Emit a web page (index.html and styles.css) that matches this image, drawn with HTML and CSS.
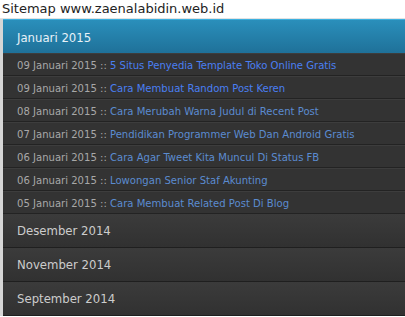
FILE: index.html
```html
<html>
  <head>
    <title>Sitemap</title>
    <link rel="stylesheet" href="styles.css">
  </head>
  <body>
    <h1 class="site-title">Sitemap www.zaenalabidin.web.id</h1>
    <div class="archive">
      <div class="month open">
        <div class="month-head">Januari 2015</div>
        <ul class="posts">
          <li><span class="date">09 Januari 2015 ::</span> <a class="fresh" href="#">5 Situs Penyedia Template Toko Online Gratis</a></li>
          <li><span class="date">09 Januari 2015 ::</span> <a class="fresh" href="#">Cara Membuat Random Post Keren</a></li>
          <li><span class="date">08 Januari 2015 ::</span> <a href="#">Cara Merubah Warna Judul di Recent Post</a></li>
          <li><span class="date">07 Januari 2015 ::</span> <a href="#">Pendidikan Programmer Web Dan Android Gratis</a></li>
          <li><span class="date">06 Januari 2015 ::</span> <a href="#">Cara Agar Tweet Kita Muncul Di Status FB</a></li>
          <li><span class="date">06 Januari 2015 ::</span> <a href="#">Lowongan Senior Staf Akunting</a></li>
          <li><span class="date">05 Januari 2015 ::</span> <a href="#">Cara Membuat Related Post Di Blog</a></li>
        </ul>
      </div>
      <div class="month">
        <div class="month-head">Desember 2014</div>
      </div>
      <div class="month">
        <div class="month-head">November 2014</div>
      </div>
      <div class="month">
        <div class="month-head">September 2014</div>
      </div>
    </div>
  </body>
</html>
```

FILE: styles.css
```css
body,
html {
  margin: 0;
  padding: 0;
  background-color: #ffffff;
  font-family: "DejaVu Sans Condensed", "DejaVu Sans", sans-serif;
}

.site-title {
  margin: 0;
  padding: 0 0 0 2px;
  height: 18px;
  line-height: 18px;
  font-size: 13px;
  font-weight: normal;
  font-family: "DejaVu Sans", sans-serif;
  color: #222222;
  border-bottom: 1px solid #e2e2e2;
}

.archive {
  border-left: 3px solid #d6d6d6;
  background-color: #333333;
}

.month-head {
  height: 33px;
  line-height: 33px;
  padding-left: 14px;
  font-size: 13px;
  color: #cccccc;
  background-image: linear-gradient(to bottom, #3b3b3b, #313131);
  border-bottom: 1px solid #1f1f1f;
}

.month.open .month-head {
  color: #e8f2f8;
  background-image: linear-gradient(to bottom, #2a8fbb, #1f7199);
  border-top: 1px solid #3cb0df;
  height: 32px;
  padding-top: 1px;
  border-bottom: none;
}

.posts {
  list-style: none;
  margin: 0;
  padding: 0;
}

.posts li {
  height: 18px;
  line-height: 18px;
  padding: 3px 0 0 14px;
  font-size: 11.2px;
  background-color: #333333;
  border-top: 1px solid #3d3d3d;
  border-bottom: 1px solid #232323;
  white-space: nowrap;
}

.date {
  color: #a8a8a8;
}

.posts a {
  color: #5b8bd0;
  text-decoration: none;
}

.posts a.fresh {
  color: #4a7ff2;
}
```
